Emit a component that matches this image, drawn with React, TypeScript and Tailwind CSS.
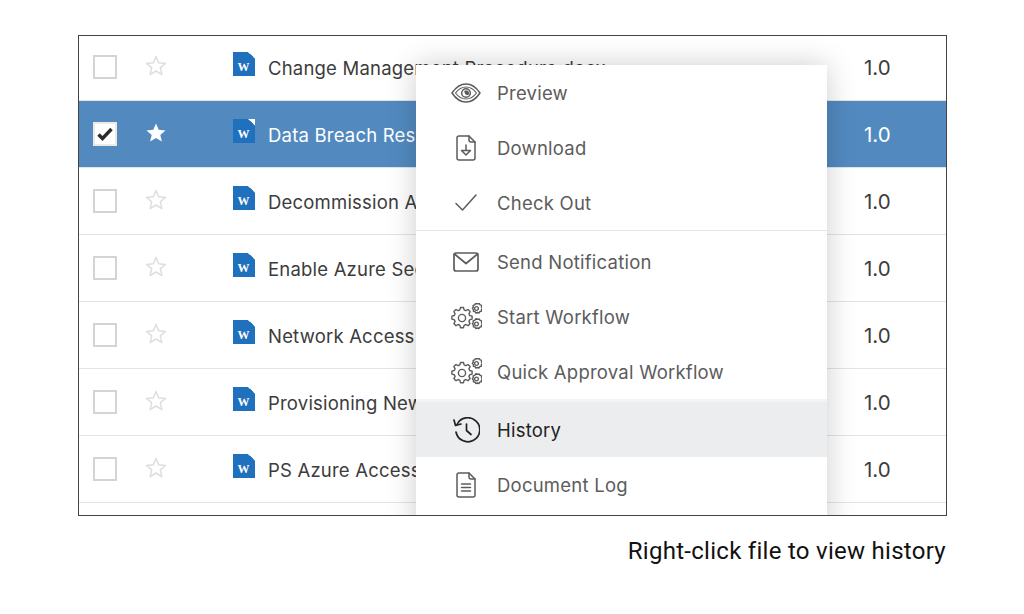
import React from "react";

const rows = [
  { name: "Change Management Procedure.docx" },
  { name: "Data Breach Response Plan.docx", selected: true },
  { name: "Decommission Azure Server.docx" },
  { name: "Enable Azure Security Center.docx" },
  { name: "Network Access Policy.docx" },
  { name: "Provisioning New Users.docx" },
  { name: "PS Azure Access Policy.docx" },
];

function WordIcon() {
  return (
    <svg width="22" height="24" viewBox="0 0 22 24" className="shrink-0">
      <path d="M0 0H15L22 6.500V24H0Z" fill="#1f70bd" />
      <path d="M15 0H22V6.500Z" fill="#ffffff" />
      <path d="M16.800 1.500L20.600 5.200H16.800Z" fill="#1f70bd" />
      <text x="10.500" y="18.500" textAnchor="middle" fontSize="12" fontWeight="700" fill="#ffffff" fontFamily="'Liberation Serif', serif">W</text>
    </svg>
  );
}

function Star({ filled }: { filled?: boolean }) {
  return (
    <svg width="22" height="22" viewBox="0 0 22 22" className="shrink-0">
      <path
        d="M11 1.500l2.700 6.300 6.800.6-5.200 4.500 1.600 6.700-5.900-3.600-5.900 3.600 1.600-6.700L1.500 8.400l6.800-.6z"
        fill={filled ? "#ffffff" : "none"}
        stroke={filled ? "none" : "#dedede"}
        strokeWidth="1.500"
        strokeLinejoin="round"
      />
    </svg>
  );
}

function Row({ name, selected }: { name: string; selected?: boolean }) {
  return (
    <div
      className={`flex h-[67px] shrink-0 items-center border-b pl-[14px] ${
        selected ? "border-[#dbe6f1] bg-[#528ac0] text-white" : "border-[#e3e3e3] bg-white text-[#3c3c3c]"
      }`}
    >
      <div
        className={`flex h-[24px] w-[24px] shrink-0 items-center justify-center border-2 bg-white ${
          selected ? "border-[#ebebe6]" : "border-[#d4d4d4]"
        }`}
      >
        {selected && (
          <svg width="16" height="14" viewBox="0 0 16 14">
            <path d="M1.500 7.500l4 4L14.500 2" fill="none" stroke="#2c2c2c" strokeWidth="3.400" />
          </svg>
        )}
      </div>
      <div className="-mt-[2px] ml-[28px] mr-[66px] flex">
        <Star filled={selected} />
      </div>
      <div className="-mt-[6px]">
        <WordIcon />
      </div>
      <span className="ml-[13px] mt-[4px] w-[596px] shrink-0 whitespace-nowrap text-[18.5px] tracking-[0.2px]">{name}</span>
      <span className="mt-[2px] text-[20.5px] leading-[28px]">1.0</span>
    </div>
  );
}

const ic = { fill: "none", stroke: "currentColor", strokeWidth: 1.5, strokeLinecap: "round" as const, strokeLinejoin: "round" as const };

function Gears() {
  const big =
    "M12.500 5.500h3l.6 2.400 1.700.8 2.200-1.200 2.100 2.100-1.200 2.200.8 1.700 2.400.6v3l-2.400.6-.8 1.700 1.200 2.200-2.100 2.100-2.200-1.200-1.700.8-.6 2.400h-3l-.6-2.400-1.700-.8-2.200 1.200-2.100-2.100 1.200-2.200-.8-1.700-2.400-.6v-3l2.400-.6.8-1.700-1.200-2.200 2.100-2.100 2.200 1.200 1.700-.8z";
  const small =
    "M0 -5.400l1.200.8 1.600-.4.8 1.400 1.600.5-.2 1.600.9 1.400-1 1.200 0 1.600-1.600.4-.9 1.400-1.500-.5-1.500.5-.9-1.400-1.600-.4 0-1.600-1-1.200.9-1.400-.2-1.600 1.600-.5.8-1.400 1.600.4z";
  return (
    <svg width="34" height="28" viewBox="0 0 34 28" {...ic} strokeWidth={1.4} className="-ml-[3px]">
      <path d={big} transform="translate(0 -1)" />
      <circle cx="14" cy="15" r="3.600" />
      <g transform="translate(28.500 5.500)">
        <path d={small} />
        <circle r="1.900" />
      </g>
      <g transform="translate(28.500 21)">
        <path d={small} />
        <circle r="1.900" />
      </g>
    </svg>
  );
}

function Icon({ name }: { name: string }) {
  switch (name) {
    case "eye":
      return (
        <svg width="30" height="20" viewBox="0 0 30 20" {...ic}>
          <path d="M1 10C5 4 9.500 1 15 1s10 3 14 9c-4 6-8.500 9-14 9S5 16 1 10z" />
          <path d="M4.500 10C7.500 6 11 4 15 4s7.500 2 10.500 6c-3 4-6.500 6-10.500 6S7.500 14 4.500 10z" strokeWidth="1.100" />
          <circle cx="15" cy="10" r="4.300" />
          <path d="M13.500 7.500a3.500 3.500 0 0 0 4 4.500 3.500 3.500 0 0 0-1-4.500z" fill="currentColor" stroke="none" />
        </svg>
      );
    case "download":
      return (
        <svg width="20" height="26" viewBox="0 0 20 26" {...ic}>
          <path d="M3 1h10l6 6v16a2 2 0 0 1-2 2H3a2 2 0 0 1-2-2V3a2 2 0 0 1 2-2z" />
          <path d="M13 1v4a2 2 0 0 0 2 2h4" />
          <path d="M10 10v5.500M5.500 15.500h9L10 20z" />
        </svg>
      );
    case "check":
      return (
        <svg width="22" height="17" viewBox="0 0 22 17" {...ic}>
          <path d="M1 9.500l6.500 6.500L21 1" />
        </svg>
      );
    case "mail":
      return (
        <svg width="26" height="20" viewBox="0 0 26 20" {...ic} strokeWidth={1.700}>
          <rect x="1" y="1" width="24" height="18" rx="2" />
          <path d="M1.500 2l11.500 9.500L24.500 2" />
        </svg>
      );
    case "gears":
      return <Gears />;
    case "history":
      return (
        <svg width="28" height="26" viewBox="0 0 28 26" {...ic} strokeWidth={1.700}>
          <path d="M5 7.500A12 12 0 1 1 4 15" />
          <path d="M2 3l1.500 5.500L9 7" />
          <path d="M14.500 7v6.500l4.500 4" />
        </svg>
      );
    default:
      return (
        <svg width="20" height="26" viewBox="0 0 20 26" {...ic}>
          <path d="M3 1h10l6 6v16a2 2 0 0 1-2 2H3a2 2 0 0 1-2-2V3a2 2 0 0 1 2-2z" />
          <path d="M13 1v4a2 2 0 0 0 2 2h4" />
          <path d="M5.500 12h9M5.500 15.500h9M5.500 19h9" />
        </svg>
      );
  }
}

function Item({ icon, label, active }: { icon: string; label: string; active?: boolean }) {
  return (
    <div
      className={`flex h-[55px] shrink-0 items-center pl-[30px] text-[18.5px] tracking-[0.23px] ${
        active ? "bg-[#ecedee] text-[#222222]" : "text-[#5c5c5c]"
      }`}
    >
      <div className="flex w-[40px] shrink-0 items-center justify-center">
        <Icon name={icon} />
      </div>
      <span className="ml-[11px] mt-[2px] whitespace-nowrap">{label}</span>
    </div>
  );
}

export default function App() {
  return (
    <div className="h-[614px] w-[1024px] bg-white pl-[78px] pt-[35px] font-['Inter','Liberation_Sans',sans-serif]">
      <div className="relative h-[481px] w-[869px] overflow-hidden border border-[#444444] bg-white">
        <div className="-mt-[2px] flex flex-col">
          {rows.map((r) => (
            <Row key={r.name} name={r.name} selected={r.selected} />
          ))}
        </div>
        <div className="absolute left-[337px] top-[29px] flex w-[411px] flex-col bg-white shadow-[0_0_28px_rgba(0,0,0,0.2)]">
          <Item icon="eye" label="Preview" />
          <Item icon="download" label="Download" />
          <Item icon="check" label="Check Out" />
          <div className="h-px bg-[#e6e6e6]" />
          <div className="h-[3px]" />
          <Item icon="mail" label="Send Notification" />
          <Item icon="gears" label="Start Workflow" />
          <Item icon="gears" label="Quick Approval Workflow" />
          <div className="h-[3px] bg-[#f3f3f3]" />
          <Item icon="history" label="History" active />
          <Item icon="doc" label="Document Log" />
          <div className="h-[40px]" />
        </div>
      </div>
      <p className="mt-[19px] w-[868px] text-right font-['Roboto',sans-serif] text-[24px] leading-[32px] tracking-[0.28px] text-[#111111]">
        Right-click file to view history
      </p>
    </div>
  );
}
